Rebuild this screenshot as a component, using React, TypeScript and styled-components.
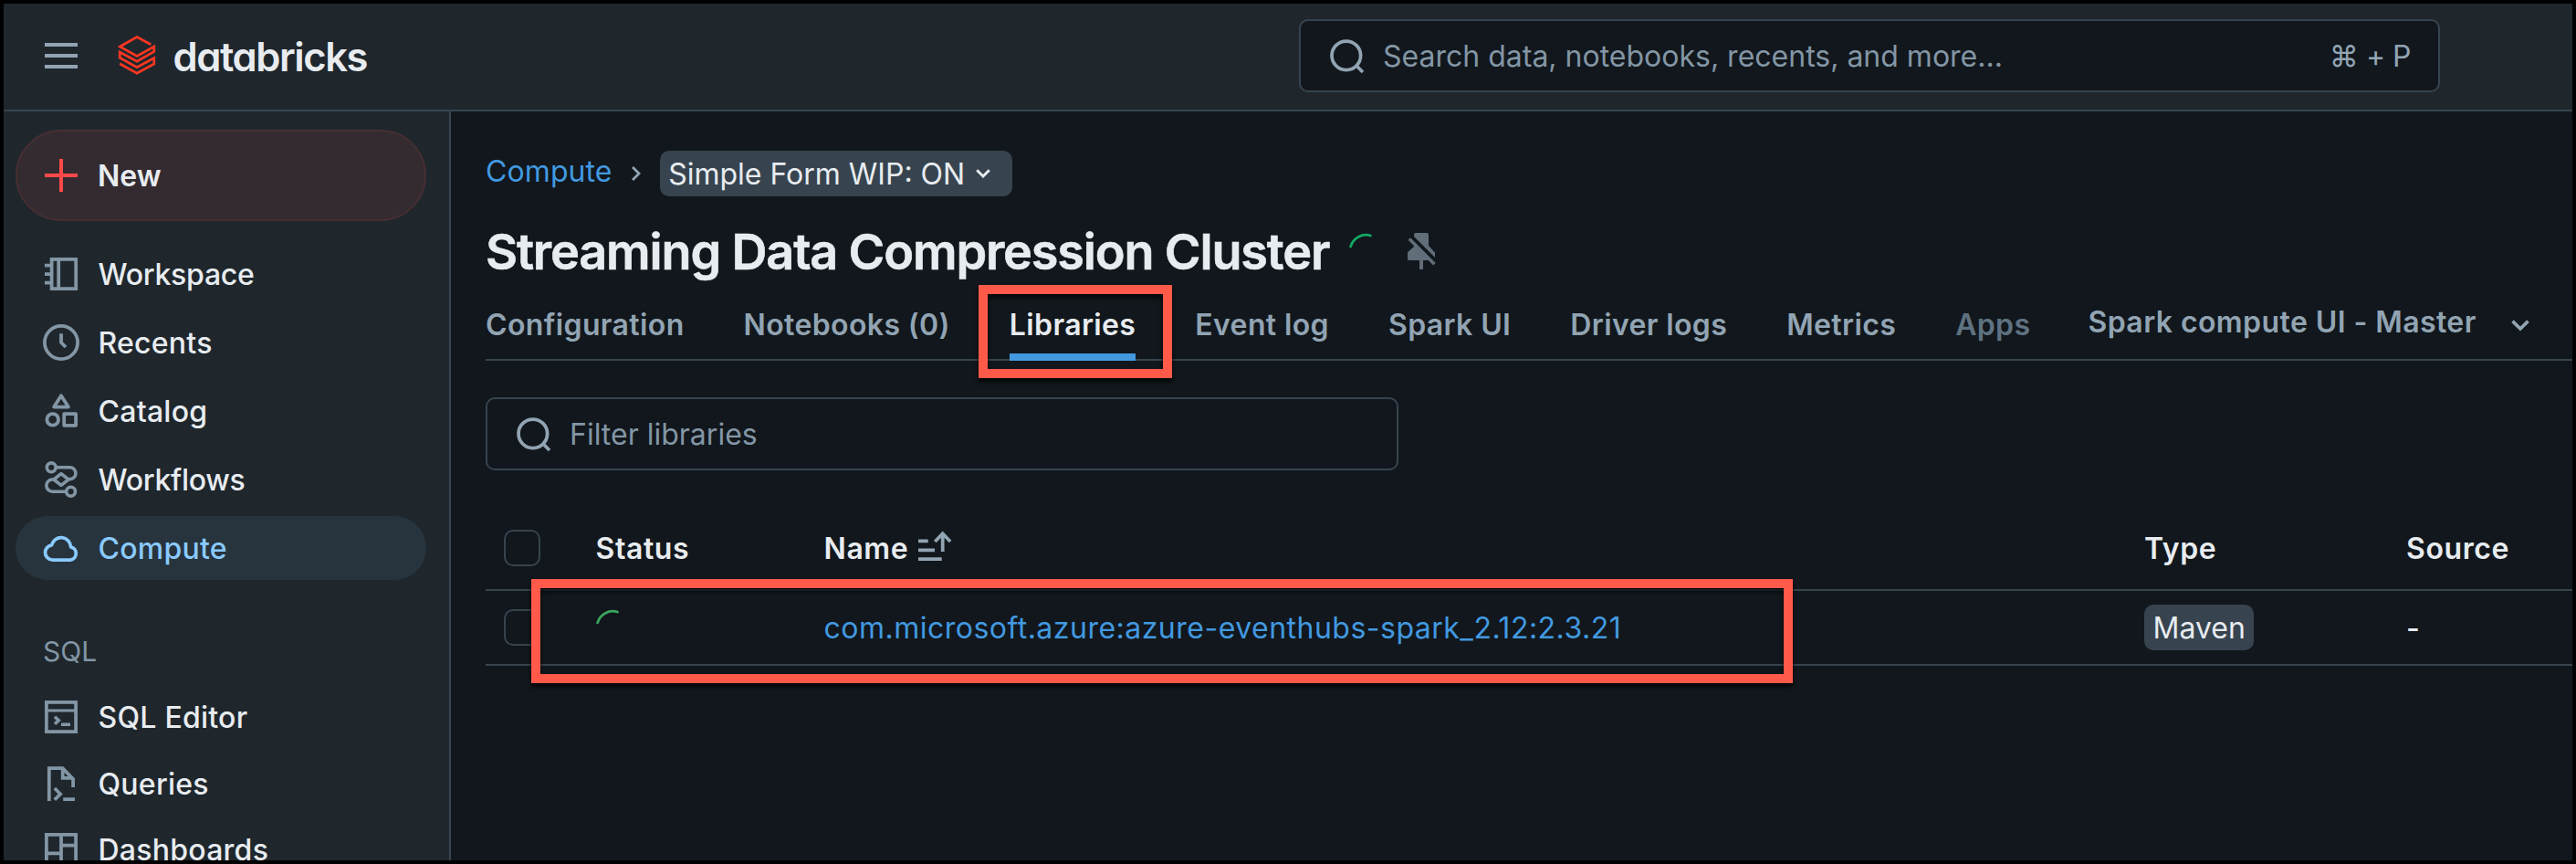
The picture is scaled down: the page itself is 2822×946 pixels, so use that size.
import React from "react";
import styled, { createGlobalStyle } from "styled-components";

const c = {
  page: "#11171c",
  chrome: "#1f272d",
  line: "#37444f",
  text: "#e8ecf0",
  muted: "#92a4b3",
  icon: "#8396a5",
  link: "#4299e0",
  active: "#8acaff",
  brand: "#ff3621",
  mark: "#ff594a",
};

const GlobalStyle = createGlobalStyle`
  * { box-sizing: border-box; }
  body { margin: 0; background: #000; }
  svg { display: block; flex: none; }
`;

const Window = styled.div`
  position: relative;
  width: 2822px;
  height: 946px;
  border: 4px solid #000;
  overflow: hidden;
  display: flex;
  flex-direction: column;
  background: ${c.page};
  color: ${c.text};
  font: 400 32px/40px Inter, sans-serif;
  white-space: nowrap;
`;

const Label = styled.span`
  padding-top: 2px;
`;

/* Header */
const Header = styled.header`
  flex: none;
  height: 118px;
  display: flex;
  align-items: center;
  padding: 0 145px 2px 43px;
  background: ${c.chrome};
  border-bottom: 2px solid ${c.line};
`;

const Brand = styled.div`
  display: flex;
  align-items: center;
  gap: 18.5px;
  margin-left: 42px;
`;

const Wordmark = styled(Label)`
  font-size: 43.5px;
  font-weight: 600;
  line-height: 44px;
  letter-spacing: -1.4px;
  font-feature-settings: "cv11";
`;

const SearchBox = styled.div`
  width: 1250px;
  height: 80px;
  margin-left: auto;
  display: flex;
  align-items: center;
  gap: 20px;
  padding: 0 30px;
  border: 2px solid ${c.line};
  border-radius: 10px;
  background: ${c.page};
  color: ${c.icon};
`;

const Shortcut = styled(Label)`
  margin-left: auto;
  color: ${c.muted};
  letter-spacing: -0.5px;
`;

const Body = styled.div`
  flex: 1;
  min-height: 0;
  display: flex;
`;

/* Sidebar */
const Sidebar = styled.nav`
  flex: none;
  width: 490px;
  padding: 20px 25px 0 13px;
  background: ${c.chrome};
  border-right: 2px solid ${c.line};
  overflow: hidden;
`;

const NewButton = styled.div`
  height: 100px;
  margin-bottom: 23px;
  display: flex;
  align-items: center;
  gap: 20px;
  padding-left: 28px;
  border: 2px solid #472e32;
  border-radius: 50px;
  background: #332b30;
  font-weight: 600;
`;

const NavGroup = styled.div<{ $gap: number }>`
  display: flex;
  flex-direction: column;
  gap: ${(p) => p.$gap}px;
`;

const NavItem = styled.div<{ $active?: boolean; $tight?: boolean }>`
  height: 70px;
  display: flex;
  align-items: center;
  gap: 20.5px;
  padding-left: 30px;
  border-radius: 35px;
  font-weight: 450;
  letter-spacing: ${(p) => (p.$tight ? -0.25 : 0.25)}px;
  color: ${(p) => (p.$active ? c.active : c.text)};
  background: ${(p) => (p.$active ? "#27343d" : "transparent")};
  svg { color: ${(p) => (p.$active ? c.active : c.icon)}; }
`;

const NavHeading = styled.div`
  padding: 58px 0 17px 30px;
  color: ${c.icon};
  font-size: 30px;
`;

/* Main */
const Main = styled.main`
  flex: 1;
  min-width: 0;
  padding: 43px 0 0 38px;
`;

const Breadcrumb = styled.div`
  display: flex;
  align-items: center;
  height: 50px;
`;

const CrumbLink = styled.a`
  color: ${c.link};
  margin-bottom: 4px;
  letter-spacing: 0.1px;
`;

const CrumbArrow = styled.span`
  display: flex;
  color: ${c.muted};
  margin: 0 20.5px 0 20px;
`;

const Tag = styled.span<{ $wide?: boolean }>`
  height: 50px;
  width: ${(p) => (p.$wide ? "386px" : "auto")};
  display: inline-flex;
  align-items: center;
  gap: 12px;
  padding: 0 ${(p) => (p.$wide ? 9 : 9.5)}px;
  border-radius: 10px;
  background: ${c.line};
  vertical-align: top;
`;

const TitleRow = styled.div`
  display: flex;
  align-items: center;
  height: 60px;
  margin-top: 30px;
`;

const Title = styled.h1`
  margin: 0;
  width: 944px;
  padding-top: 1px;
  font-size: 54px;
  font-weight: 600;
  line-height: 60px;
  letter-spacing: -1.16px;
  -webkit-text-stroke: 0.6px ${c.text};
`;

const PinSlot = styled.span`
  margin-left: 22px;
`;

const Tabs = styled.div`
  display: flex;
  gap: 65px;
  height: 77px;
  margin-top: 13px;
  border-bottom: 2px solid ${c.line};
`;

const Tab = styled.div<{ $state?: "active" | "disabled" }>`
  height: 77px;
  padding-top: 6px;
  line-height: 63px;
  font-weight: 600;
  letter-spacing: 0.37px;
  border-bottom: 8px solid ${(p) => (p.$state === "active" ? c.link : "transparent")};
  color: ${(p) =>
    p.$state === "active" ? c.text : p.$state === "disabled" ? "#5f7281" : c.muted};
`;

const MoreTab = styled.div`
  display: flex;
  align-items: center;
  height: 70px;
  gap: 38px;
  margin-left: -2px;
  color: ${c.muted};
  font-weight: 600;
  letter-spacing: 0.42px;
  svg { margin-top: 7px; }
`;

const Filter = styled.div`
  width: 1000px;
  height: 80px;
  margin: 40px 0;
  display: flex;
  align-items: center;
  gap: 20px;
  padding-left: 30px;
  border: 2px solid ${c.line};
  border-radius: 10px;
  color: ${c.icon};
`;

const Row = styled.div<{ $head?: boolean }>`
  display: grid;
  grid-template-columns: 120.5px 250px 1446.5px 287px 1fr;
  align-items: center;
  height: ${(p) => (p.$head ? 92 : 82)}px;
  border-bottom: 2px solid ${c.line};
  font-weight: ${(p) => (p.$head ? 600 : 400)};
  letter-spacing: ${(p) => (p.$head ? 0.6 : 0)}px;
`;

const Checkbox = styled.span`
  width: 40px;
  height: 40px;
  margin-left: 20px;
  border: 2px solid ${c.line};
  border-radius: 10px;
`;

const SpinnerCell = styled.span`
  margin-left: -2px;
`;

const NameHead = styled.span`
  display: flex;
  align-items: center;
  gap: 9px;
  svg { margin-top: -6px; }
`;

const LibraryLink = styled(Label)`
  color: ${c.link};
  letter-spacing: 0.49px;
`;

const Dash = styled(Label)`
  font-weight: 500;
`;

/* Callout frames laid over the page */
const Callout = styled.div<{ $x: number; $y: number; $w: number; $h: number }>`
  position: absolute;
  left: ${(p) => p.$x}px;
  top: ${(p) => p.$y}px;
  width: ${(p) => p.$w}px;
  height: ${(p) => p.$h}px;
  border: 10px solid ${c.mark};
  filter: drop-shadow(0 4px 2.5px rgba(0, 0, 0, 0.75));
`;

const Icon = ({ children, w = 3.75 }: { children: React.ReactNode; w?: number }) => (
  <svg width="40" height="40" viewBox="0 0 40 40" fill="none" stroke="currentColor" strokeWidth={w}>
    {children}
  </svg>
);

const MenuIcon = () => (
  <svg width="40" height="40" viewBox="0 0 40 40" stroke={c.muted} strokeWidth="4">
    <path d="M2 8h36M2 20h36M2 32h36" />
  </svg>
);

const Logo = () => (
  <svg width="42" height="44" viewBox="129 39 42 44" fill="none" stroke={c.brand} strokeWidth="2.7">
    <path d="M165.3 48.8 150 40.5 131.2 51 150 61.5 168.8 51V56.5L150 67.2 131.2 57V63.3L150 73.8 168.8 63.5V70L150 80.3 131.2 69.7" />
  </svg>
);

const SearchIcon = () => (
  <svg width="40" height="40" viewBox="0 0 40 40" fill="none" stroke={c.muted} strokeWidth="3.75">
    <circle cx="19.8" cy="19.8" r="15.8" />
    <path d="M30.5 30.5 38 38" />
  </svg>
);

const WorkspaceIcon = () => (
  <Icon>
    <rect x="9.6" y="3.9" width="26.6" height="32.2" />
    <path d="M17.2 4v32M2 10.7h7M2 20h7M2 29.5h7" />
  </Icon>
);

const RecentsIcon = () => (
  <Icon>
    <circle cx="20" cy="20" r="18.1" />
    <path d="M20 10.2V20l5 5" />
  </Icon>
);

const CatalogIcon = () => (
  <Icon>
    <path d="M20 3.2 12.1 15.5h15.8Z" strokeLinejoin="round" />
    <circle cx="10.7" cy="29.4" r="6.3" />
    <rect x="23.2" y="23.2" width="12.9" height="12.6" strokeLinejoin="round" />
  </Icon>
);

const WorkflowsIcon = () => (
  <Icon w={3.6}>
    <circle cx="9.2" cy="6.8" r="4.9" />
    <circle cx="30.6" cy="33.2" r="4.9" />
    <path d="M14 6.8h15.6a6.3 6.3 0 0 1 0 12.8L28 20l-8 6.3-8-6.3 8-6.3 8 6.3" strokeLinejoin="round" />
    <path d="M12 20h-1.6a6.5 6.5 0 0 0 0 13.2H26" />
  </Icon>
);

const ComputeIcon = () => (
  <Icon>
    <path
      d="M10 33a8.1 8.1 0 0 1-.5-16.1A10.7 10.7 0 0 1 30.6 18.9 7.2 7.2 0 0 1 30.5 33Z"
      strokeLinejoin="round"
    />
  </Icon>
);

const EditorIcon = () => (
  <Icon>
    <rect x="3.9" y="3.9" width="32.2" height="32.2" />
    <path d="M4 13h32" strokeWidth="3" />
    <path d="m13 19.7 4.2 4-4.2 4M20 28.2h10" strokeWidth="3.6" />
  </Icon>
);

const QueriesIcon = () => (
  <Icon>
    <path d="M6.8 39V3.2h14.8L33.1 15v9M21.7 3.5V13.9H33" />
    <path d="m12.8 25 6.3 6.4-6.3 6.4M22.2 37.1H35" />
  </Icon>
);

const DashboardsIcon = () => (
  <Icon>
    <rect x="3.9" y="3.9" width="32.2" height="32.2" />
    <path d="M20 4v32M20 15.6h16M4 24.4h16" />
  </Icon>
);

const Spinner = ({ color }: { color: string }) => (
  <svg width="40" height="40" viewBox="0 0 40 40" fill="none" stroke={color} strokeWidth="2.8" strokeLinecap="round">
    <path d="M3.6 15A17.4 17.4 0 0 1 25.4 3" />
  </svg>
);

const PinOffIcon = () => (
  <svg width="40" height="40" viewBox="0 0 40 40" fill="#616d79">
    <path d="M11 4V2a2 2 0 0 1 2-2h12a2 2 0 0 1 2 2v12l7 7.5v5.5Z" />
    <path d="M11 13.5V15l-6.5 5.8Q4 21.3 4 22v6.5q0 1.5 1.5 1.5H17v10h4V30h8Z" />
    <path d="M5.8 6.5 33.5 34.3" stroke="#616d79" strokeWidth="3.6" />
  </svg>
);

const SortIcon = () => (
  <svg width="40" height="40" viewBox="0 0 40 40" fill="none" stroke={c.muted} strokeWidth="3.75">
    <path d="M2 15.3h10.7M2 25.3h18M2 35.2h25.7M28.7 27V7M20.3 16l8.4-8.7 8.4 8.7" />
  </svg>
);

const ChevronDown = ({ w = 16 }: { w?: number }) => (
  <svg width={w} height={w * 0.64} viewBox="0 0 16 10.2" fill="none" stroke="currentColor" strokeWidth="2.9">
    <path d="m1.2 1.3 6.8 6.7 6.8-6.7" />
  </svg>
);

const nav: [string, React.ReactNode][] = [
  ["Workspace", <WorkspaceIcon />],
  ["Recents", <RecentsIcon />],
  ["Catalog", <CatalogIcon />],
  ["Workflows", <WorkflowsIcon />],
  ["Compute", <ComputeIcon />],
];

const sqlNav: [string, React.ReactNode][] = [
  ["SQL Editor", <EditorIcon />],
  ["Queries", <QueriesIcon />],
  ["Dashboards", <DashboardsIcon />],
];

const tabs: [string, ("active" | "disabled")?][] = [
  ["Configuration"],
  ["Notebooks (0)"],
  ["Libraries", "active"],
  ["Event log"],
  ["Spark UI"],
  ["Driver logs"],
  ["Metrics"],
  ["Apps", "disabled"],
];

export default function App() {
  return (
    <Window>
      <GlobalStyle />
      <Header>
        <MenuIcon />
        <Brand>
          <Logo />
          <Wordmark>databricks</Wordmark>
        </Brand>
        <SearchBox>
          <SearchIcon />
          <Label>Search data, notebooks, recents, and more...</Label>
          <Shortcut>⌘ + P</Shortcut>
        </SearchBox>
      </Header>
      <Body>
        <Sidebar>
          <NewButton>
            <svg width="40" height="40" viewBox="0 0 40 40" stroke="#ff4949" strokeWidth="4">
              <path d="M2 20h36M20 2v36" />
            </svg>
            <Label>New</Label>
          </NewButton>
          <NavGroup $gap={5}>
            {nav.map(([label, icon]) => (
              <NavItem key={label} $active={label === "Compute"} $tight={label.startsWith("W")}>
                {icon}
                <Label>{label}</Label>
              </NavItem>
            ))}
          </NavGroup>
          <NavHeading>SQL</NavHeading>
          <NavGroup $gap={2.5}>
            {sqlNav.map(([label, icon]) => (
              <NavItem key={label}>
                {icon}
                <Label>{label}</Label>
              </NavItem>
            ))}
          </NavGroup>
        </Sidebar>
        <Main>
          <Breadcrumb>
            <CrumbLink>Compute</CrumbLink>
            <CrumbArrow>
              <svg width="12" height="18" viewBox="0 0 12 18" fill="none" stroke="currentColor" strokeWidth="2.8">
                <path d="m2 2 7 7-7 7" />
              </svg>
            </CrumbArrow>
            <Tag $wide>
              <Label>Simple Form WIP: ON</Label>
              <ChevronDown />
            </Tag>
          </Breadcrumb>
          <TitleRow>
            <Title>Streaming Data Compression Cluster</Title>
            <Spinner color="#14a866" />
            <PinSlot>
              <PinOffIcon />
            </PinSlot>
          </TitleRow>
          <Tabs>
            {tabs.map(([label, state]) => (
              <Tab key={label} $state={state}>
                {label}
              </Tab>
            ))}
            <MoreTab>
              Spark compute UI - Master <ChevronDown w={20} />
            </MoreTab>
          </Tabs>
          <Filter>
            <SearchIcon />
            <Label>Filter libraries</Label>
          </Filter>
          <Row $head>
            <Checkbox />
            <Label>Status</Label>
            <NameHead>
              <Label>Name</Label>
              <SortIcon />
            </NameHead>
            <Label>Type</Label>
            <Label>Source</Label>
          </Row>
          <Row>
            <Checkbox />
            <SpinnerCell>
              <Spinner color="#3ba65e" />
            </SpinnerCell>
            <LibraryLink>com.microsoft.azure:azure-eventhubs-spark_2.12:2.3.21</LibraryLink>
            <span>
              <Tag>
                <Label>Maven</Label>
              </Tag>
            </span>
            <Dash>-</Dash>
          </Row>
        </Main>
      </Body>
      <Callout $x={1068} $y={308} $w={212} $h={102} />
      <Callout $x={578} $y={630} $w={1382} $h={114} />
    </Window>
  );
}
